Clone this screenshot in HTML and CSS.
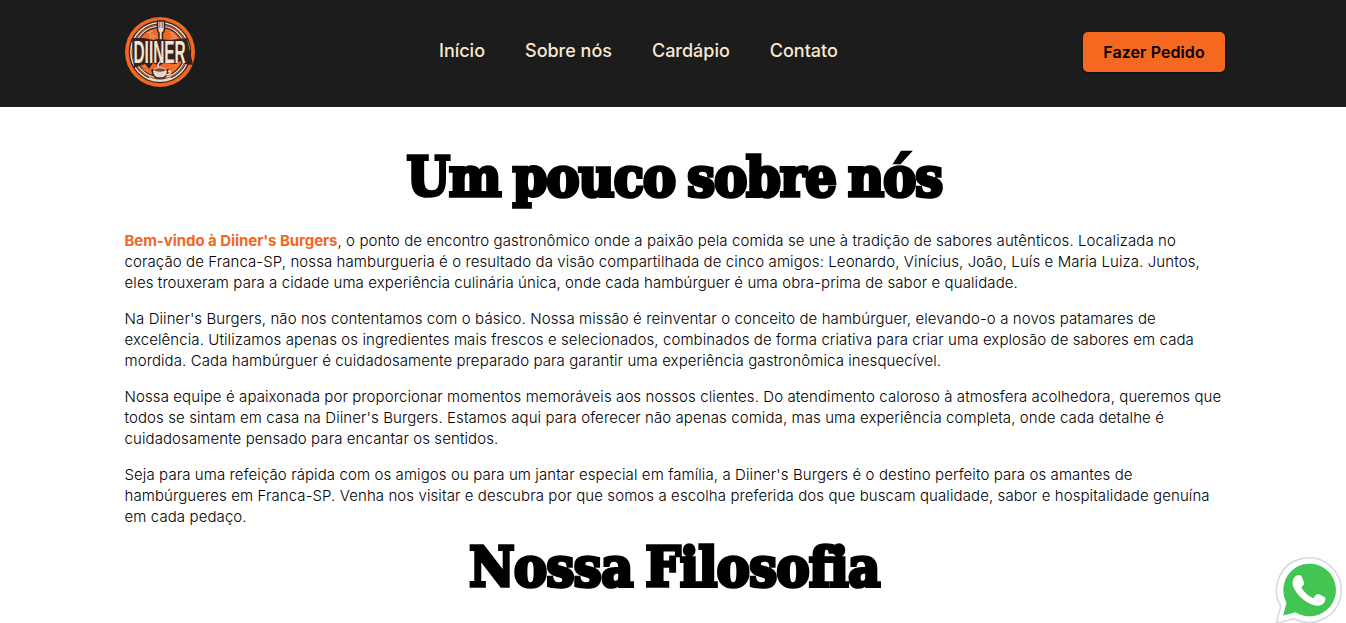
FILE: index.html
```html
<!DOCTYPE html>
<html lang="pt-BR">
<head>
<meta charset="utf-8">
<title>Diiner's Burgers</title>
<link rel="stylesheet" href="styles.css">
</head>
<body>
<header class="header">
  <div class="header-inner">
    <a class="logo" href="#">
      <svg viewBox="0 0 70 70" width="70" height="70" aria-label="Diiner">
        <circle cx="35" cy="35" r="35" fill="#f26722"/>
        <circle cx="35" cy="35" r="29.5" fill="none" stroke="#33211f" stroke-width="3.5"/>
        <circle cx="35" cy="35" r="29.2" fill="none" stroke="#ead8c4" stroke-width="1.5"/>
        <circle cx="35" cy="35" r="25.5" fill="none" stroke="#33211f" stroke-width="3"/>
        <circle cx="35" cy="35" r="25.8" fill="none" stroke="#ead8c4" stroke-width="1.3"/>
        <g fill="none" stroke="#eba77d" stroke-width="1">
          <path d="M22 16l6-2M25 15l1 6M28 17v5M28 19l4 1M45 15l5 2M46 18l6 2M46 21l5 1"/>
          <path d="M17 52l8 4M19 49l8 3M44 54l8-3M44 50l9-2M24 59l4 1M44 59l4-1" stroke-dasharray="1 1"/>
        </g>
        <path d="M32.500 4h7v8q0 3-2 4v12h-3.500V16q-1.500-1-1.500-4z" fill="#ead8c4" stroke="#33211f" stroke-width="1.5"/>
        <path d="M34.800 5v6M37.200 5v6" stroke="#6d4436" stroke-width=".8"/>
        <path d="M7 21h12l9 2 5-1 12 1 17-2 6 27-8-1-5-3-4 3-12-1-5 3-6-3-4 6-4-5-6 2-5 2z" fill="#33211f"/>
        <g class="logo-word" transform="translate(8.500 46) scale(.57 1.150)">
          <text>DIINER</text>
        </g>
        <path d="M27 53h16q-1 7-5 8h-6q-4-1-5-8z" fill="#ead8c4" stroke="#33211f" stroke-width="1.5"/>
        <ellipse cx="35" cy="53" rx="6" ry="2.2" fill="#74483b" stroke="#ead8c4"/>
        <path d="M43 54q4 0 2 3l-4 1M24 61q11 5 22 0" fill="none" stroke="#ead8c4" stroke-width="1.5"/>
        <path d="M34 50q-2-2 0-4t1-3" fill="none" stroke="#ead8c4" stroke-width="1.5"/>
      </svg>
    </a>
    <nav class="nav">
      <a href="#">Início</a>
      <a href="#">Sobre nós</a>
      <a href="#">Cardápio</a>
      <a href="#">Contato</a>
    </nav>
    <a class="order" href="#">Fazer Pedido</a>
  </div>
</header>
<main class="about">
  <h1 class="title title-about"><span>Um pouco sobre nós</span></h1>
  <p><strong>Bem-vindo à Diiner's Burgers</strong>, o ponto de encontro gastronômico onde a paixão pela comida se une à tradição de sabores autênticos. Localizada no coração de Franca-SP, nossa hamburgueria é o resultado da visão compartilhada de cinco amigos: Leonardo, Vinícius, João, Luís e Maria Luiza. Juntos, eles trouxeram para a cidade uma experiência culinária única, onde cada hambúrguer é uma obra-prima de sabor e qualidade.</p>
  <p>Na Diiner's Burgers, não nos contentamos com o básico. Nossa missão é reinventar o conceito de hambúrguer, elevando-o a novos patamares de excelência. Utilizamos apenas os ingredientes mais frescos e selecionados, combinados de forma criativa para criar uma explosão de sabores em cada mordida. Cada hambúrguer é cuidadosamente preparado para garantir uma experiência gastronômica inesquecível.</p>
  <p>Nossa equipe é apaixonada por proporcionar momentos memoráveis aos nossos clientes. Do atendimento caloroso à atmosfera acolhedora, queremos que todos se sintam em casa na Diiner's Burgers. Estamos aqui para oferecer não apenas comida, mas uma experiência completa, onde cada detalhe é cuidadosamente pensado para encantar os sentidos.</p>
  <p>Seja para uma refeição rápida com os amigos ou para um jantar especial em família, a Diiner's Burgers é o destino perfeito para os amantes de hambúrgueres em Franca-SP. Venha nos visitar e descubra por que somos a escolha preferida dos que buscam qualidade, sabor e hospitalidade genuína em cada pedaço.</p>
  <h2 class="title title-philosophy"><span>Nossa Filosofia</span></h2>
</main>
<a class="whatsapp" href="#" aria-label="WhatsApp">
  <svg viewBox="0 0 70 68" width="70" height="68">
    <path d="M1.300 67.200L5.700 50A32.300 32.300 0 1 1 19 62.800z" fill="#fff" stroke="#d3dce0" stroke-width="1.6" stroke-linejoin="round"/>
    <path d="M9.300 59.500l3.100-13.200A26.300 26.300 0 1 1 21.600 56.200z" transform="translate(-1 0)" fill="#42c553"/>
    <path d="M22.1 19.5C24 18.4 26.4 18.8 27.2 20.7L29.6 26.4C30 27.5 29.5 28.5 28.5 29.5L26.8 31.4C29.5 36 33.5 39.9 38.7 42.2L41.7 38.8C42.5 37.8 43.4 37.7 44.5 38.2L50 41C51.3 41.7 51 43.5 50.4 45.2C49 48.6 44.8 50.6 40.9 49.6C31 47.2 22 39 18.7 30.5C17.2 26.2 18.5 21.6 22.1 19.5Z" transform="translate(-.5 0)" fill="#fff"/>
  </svg>
</a>
</body>
</html>
```
FILE: styles.css
```css
* { box-sizing: border-box; }

body {
  margin: 0;
  height: 623px;
  overflow: hidden;
  background: #fff;
  color: #000;
  font-family: Inter, sans-serif;
}

a { text-decoration: none; }

.header {
  height: 107px;
  padding: 17px 121px 0 125px;
  background: #1c1c1c;
}

.header-inner {
  display: grid;
  grid-template-columns: 314px 1fr auto;
  align-items: center;
  height: 70px;
}

.logo, .logo svg { display: block; }

.logo-word text {
  fill: #f3e4cf;
  font: bold 27px "Liberation Sans", sans-serif;
}

.nav {
  display: flex;
  gap: 40px;
  margin-top: -2px;
}

.nav a {
  color: #f8e8d0;
  font-size: 18px;
  font-weight: 500;
  letter-spacing: -0.01px;
  line-height: 22px;
}

.order {
  width: 142px;
  height: 40px;
  border-radius: 5px;
  background: #f46820;
  box-shadow: 0 1px 2px rgba(0, 0, 0, 0.5);
  color: #000;
  font-size: 16px;
  font-weight: 600;
  letter-spacing: 0.08px;
  line-height: 40px;
  text-align: center;
}

.about {
  width: 1100px;
  margin-left: 124.5px;
}

.title {
  margin: 0;
  font-family: "DejaVu Serif Condensed", "DejaVu Serif", serif;
  font-size: 55px;
  font-weight: bold;
  letter-spacing: -0.9px;
  word-spacing: -4px;
  line-height: 80px;
  text-align: center;
  white-space: nowrap;
  stroke-linejoin: round;
  -webkit-text-stroke: 3.6px #000;
}

.title span { display: inline-block; }

.title-about { padding: 30px 0 13px; }

.about p {
  margin: 0 0 15px;
  font-size: 15px;
  font-weight: 300;
  line-height: 21px;
  letter-spacing: 0.094px;
}

.about strong {
  color: #f26722;
  font-weight: 700;
  letter-spacing: -0.06px;
}

.title-philosophy { margin-top: -15px; }

.title-philosophy span { letter-spacing: -0.5px; }

.whatsapp {
  position: fixed;
  left: 1275px;
  top: 556px;
}

.whatsapp svg { display: block; }
```
